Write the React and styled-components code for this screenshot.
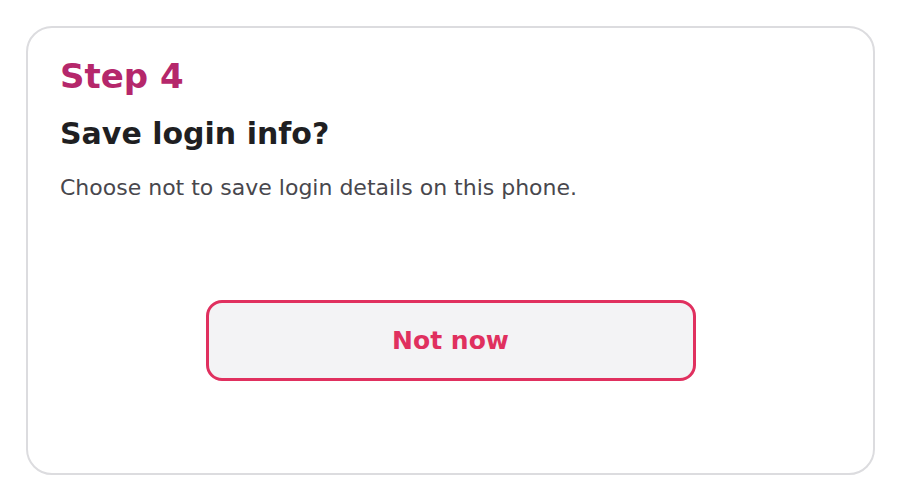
import React from 'react';
import styled, { createGlobalStyle } from 'styled-components';

const GlobalStyle = createGlobalStyle`
	html, body {
		margin: 0;
		padding: 0;
		background: #ffffff;
		font-family: "DejaVu Sans", sans-serif;
	}
`;

const Page = styled.div`
	width: 900px;
	height: 500px;
	box-sizing: border-box;
	padding: 26px 25px 25px 26px;
	display: flex;
`;

const Card = styled.div`
	flex: 1;
	box-sizing: border-box;
	border: 2px solid #dcdcdf;
	border-radius: 26px;
	padding: 28px 32px 0 32px;
	display: flex;
	flex-direction: column;
`;

const Step = styled.h2`
	margin: 0;
	font-size: 34px;
	font-weight: bold;
	line-height: 40px;
	color: #b5276b;
`;

const Title = styled.h1`
	margin: 20px 0 0 0;
	font-size: 30px;
	font-weight: bold;
	line-height: 36px;
	color: #1f1f22;
`;

const Text = styled.p`
	margin: 21px 0 0 0;
	font-size: 22px;
	line-height: 30px;
	color: #48474d;
`;

const Actions = styled.div`
	display: flex;
	justify-content: center;
	margin-top: 97px;
`;

const Button = styled.button`
	width: 490px;
	height: 81px;
	box-sizing: border-box;
	border: 3px solid #e0305f;
	border-radius: 16px;
	background: #f3f3f5;
	color: #e0305f;
	font-family: "DejaVu Sans", sans-serif;
	font-size: 25px;
	font-weight: bold;
	cursor: pointer;
`;

const App = () => {
	return (
		<>
			<GlobalStyle />
			<Page>
				<Card>
					<Step>Step 4</Step>
					<Title>Save login info?</Title>
					<Text>Choose not to save login details on this phone.</Text>
					<Actions>
						<Button>Not now</Button>
					</Actions>
				</Card>
			</Page>
		</>
	);
};

export default App;
